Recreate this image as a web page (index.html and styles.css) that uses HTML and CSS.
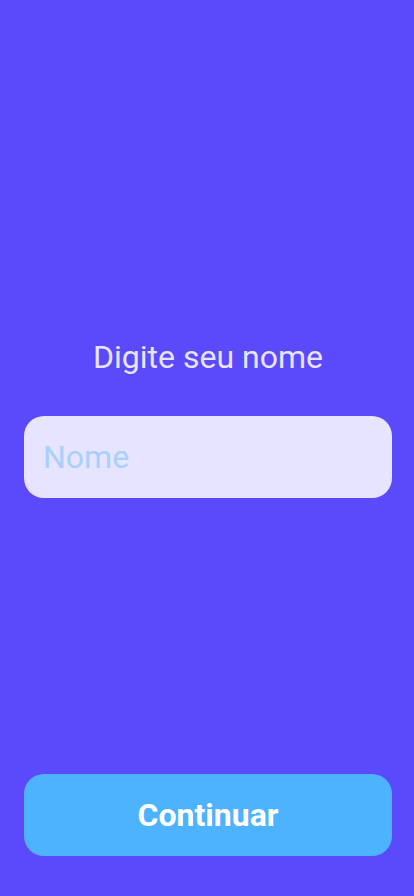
FILE: index.html
```html
<!DOCTYPE html>
<html lang="pt">
<head>
<meta charset="utf-8">
<link rel="stylesheet" href="styles.css">
</head>
<body>
<div class="screen">
  <main class="content">
    <label class="title" for="nome">Digite seu nome</label>
    <input id="nome" class="field" type="text" placeholder="Nome">
  </main>
  <button class="btn" type="button">Continuar</button>
</div>
</body>
</html>
```
FILE: styles.css
```css
html, body {
  margin: 0;
  padding: 0;
  background: #5A4AFC;
}
.screen {
  height: 896px;
  box-sizing: border-box;
  display: flex;
  flex-direction: column;
  padding: 0 22px 40px 24px;
  font-family: Roboto, "Noto Sans", sans-serif;
}
.content {
  flex: 1;
  display: flex;
  flex-direction: column;
  padding-top: 338px;
}
.title {
  display: block;
  text-align: center;
  color: #E6E4FE;
  font-size: 32px;
  line-height: 38px;
  margin-bottom: 40px;
}
.field {
  height: 82px;
  box-sizing: border-box;
  border: none;
  outline: none;
  border-radius: 20px;
  background: #E6E4FE;
  padding: 0 19px;
  font-family: inherit;
  font-size: 32px;
  color: #333;
}
.field::placeholder {
  color: #A8D0FF;
}
.btn {
  height: 82px;
  border: none;
  border-radius: 20px;
  background: #4DB3FF;
  color: #FFFFFF;
  font-family: inherit;
  font-size: 32px;
  font-weight: 700;
}
```
